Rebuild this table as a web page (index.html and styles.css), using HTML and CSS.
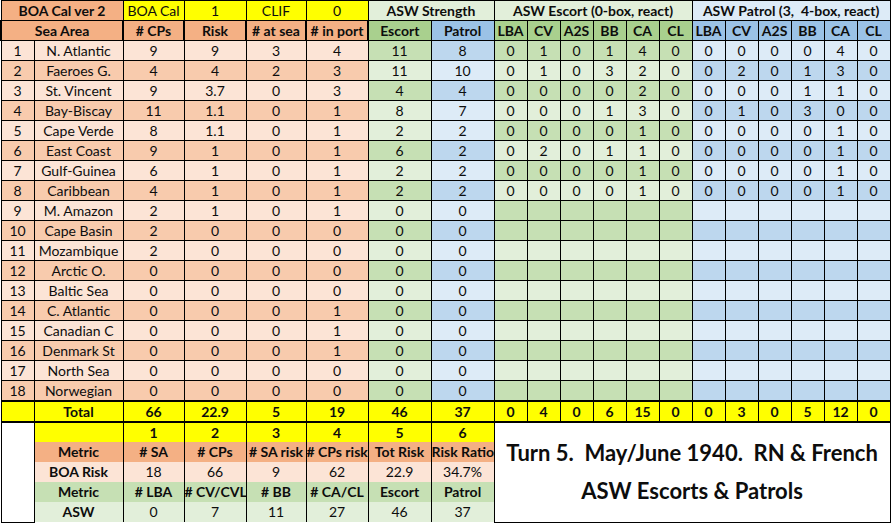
FILE: index.html
```html
<!DOCTYPE html>
<html>
<head>
<meta charset="utf-8">
<link rel="stylesheet" href="styles.css">
</head>
<body>
<table class="sheet">
<colgroup>
<col class="c-idx"><col class="c-name"><col class="c-cp"><col class="c-risk"><col class="c-sea"><col class="c-port"><col class="c-esc"><col class="c-pat">
<col class="c-s"><col class="c-s"><col class="c-s"><col class="c-s"><col class="c-s"><col class="c-s">
<col class="c-s"><col class="c-s"><col class="c-s"><col class="c-s"><col class="c-s"><col class="c-s">
</colgroup>
<tr class="top">
<td class="oh b" colspan="2">BOA Cal ver 2</td><td class="y">BOA Cal</td><td class="y">1</td><td class="y">CLIF</td><td class="y">0</td>
<td class="gt b sep" colspan="2">ASW Strength</td>
<td class="gt b sepe" colspan="6">ASW Escort (0-box, react)</td>
<td class="bt b sepe pre" colspan="6">ASW Patrol (3,  4-box, react)</td>
</tr>
<tr class="hdr">
<td class="oh b" colspan="2">Sea Area</td><td class="oh b">#&nbsp;CPs</td><td class="oh b">Risk</td><td class="oh b">#&nbsp;at sea</td><td class="oh b">#&nbsp;in port</td>
<td class="gh b sep">Escort</td><td class="bh b">Patrol</td>
<td class="gh b sepe">LBA</td><td class="gh b">CV</td><td class="gh b">A2S</td><td class="gh b">BB</td><td class="gh b">CA</td><td class="gh b">CL</td>
<td class="bh b sepe">LBA</td><td class="bh b">CV</td><td class="bh b">A2S</td><td class="bh b">BB</td><td class="bh b">CA</td><td class="bh b">CL</td>
</tr>

<tr class="lt"><td class="o">1</td><td class="o">N. Atlantic</td><td class="o">9</td><td class="o">9</td><td class="o">3</td><td class="o">4</td><td class="g2 sep">11</td><td class="b2">8</td>
<td class="g2 sepe">0</td><td class="g2">1</td><td class="g2">0</td><td class="g2">1</td><td class="g2">4</td><td class="g2">0</td>
<td class="b1 sepe">0</td><td class="b1">0</td><td class="b1">0</td><td class="b1">0</td><td class="b1">4</td><td class="b1">0</td></tr>
<tr class="dk"><td class="o">2</td><td class="o">Faeroes G.</td><td class="o">4</td><td class="o">4</td><td class="o">2</td><td class="o">3</td><td class="g1 sep">11</td><td class="b1">10</td>
<td class="g1 sepe">0</td><td class="g1">1</td><td class="g1">0</td><td class="g1">3</td><td class="g1">2</td><td class="g1">0</td>
<td class="b2 sepe">0</td><td class="b2">2</td><td class="b2">0</td><td class="b2">1</td><td class="b2">3</td><td class="b2">0</td></tr>
<tr class="lt"><td class="o">3</td><td class="o">St. Vincent</td><td class="o">9</td><td class="o">3.7</td><td class="o">0</td><td class="o">3</td><td class="g2 sep">4</td><td class="b2">4</td>
<td class="g2 sepe">0</td><td class="g2">0</td><td class="g2">0</td><td class="g2">0</td><td class="g2">2</td><td class="g2">0</td>
<td class="b1 sepe">0</td><td class="b1">0</td><td class="b1">0</td><td class="b1">1</td><td class="b1">1</td><td class="b1">0</td></tr>
<tr class="dk"><td class="o">4</td><td class="o">Bay-Biscay</td><td class="o">11</td><td class="o">1.1</td><td class="o">0</td><td class="o">1</td><td class="g1 sep">8</td><td class="b1">7</td>
<td class="g1 sepe">0</td><td class="g1">0</td><td class="g1">0</td><td class="g1">1</td><td class="g1">3</td><td class="g1">0</td>
<td class="b2 sepe">0</td><td class="b2">1</td><td class="b2">0</td><td class="b2">3</td><td class="b2">0</td><td class="b2">0</td></tr>
<tr class="lt"><td class="o">5</td><td class="o">Cape Verde</td><td class="o">8</td><td class="o">1.1</td><td class="o">0</td><td class="o">1</td><td class="g1 sep">2</td><td class="b1">2</td>
<td class="g2 sepe">0</td><td class="g2">0</td><td class="g2">0</td><td class="g2">0</td><td class="g2">1</td><td class="g2">0</td>
<td class="b1 sepe">0</td><td class="b1">0</td><td class="b1">0</td><td class="b1">0</td><td class="b1">1</td><td class="b1">0</td></tr>
<tr class="dk"><td class="o">6</td><td class="o">East Coast</td><td class="o">9</td><td class="o">1</td><td class="o">0</td><td class="o">1</td><td class="g2 sep">6</td><td class="b2">2</td>
<td class="g1 sepe">0</td><td class="g1">2</td><td class="g1">0</td><td class="g1">1</td><td class="g1">1</td><td class="g1">0</td>
<td class="b2 sepe">0</td><td class="b2">0</td><td class="b2">0</td><td class="b2">0</td><td class="b2">1</td><td class="b2">0</td></tr>
<tr class="lt"><td class="o">7</td><td class="o">Gulf-Guinea</td><td class="o">6</td><td class="o">1</td><td class="o">0</td><td class="o">1</td><td class="g1 sep">2</td><td class="b1">2</td>
<td class="g2 sepe">0</td><td class="g2">0</td><td class="g2">0</td><td class="g2">0</td><td class="g2">1</td><td class="g2">0</td>
<td class="b1 sepe">0</td><td class="b1">0</td><td class="b1">0</td><td class="b1">0</td><td class="b1">1</td><td class="b1">0</td></tr>
<tr class="dk"><td class="o">8</td><td class="o">Caribbean</td><td class="o">4</td><td class="o">1</td><td class="o">0</td><td class="o">1</td><td class="g2 sep">2</td><td class="b2">2</td>
<td class="g1 sepe">0</td><td class="g1">0</td><td class="g1">0</td><td class="g1">0</td><td class="g1">1</td><td class="g1">0</td>
<td class="b2 sepe">0</td><td class="b2">0</td><td class="b2">0</td><td class="b2">0</td><td class="b2">1</td><td class="b2">0</td></tr>
<tr class="lt"><td class="o">9</td><td class="o">M. Amazon</td><td class="o">2</td><td class="o">1</td><td class="o">0</td><td class="o">1</td><td class="g1 sep">0</td><td class="b1">0</td>
<td class="g2 sepe"></td><td class="g2"></td><td class="g2"></td><td class="g2"></td><td class="g2"></td><td class="g2"></td>
<td class="b1 sepe"></td><td class="b1"></td><td class="b1"></td><td class="b1"></td><td class="b1"></td><td class="b1"></td></tr>
<tr class="dk"><td class="o">10</td><td class="o">Cape Basin</td><td class="o">2</td><td class="o">0</td><td class="o">0</td><td class="o">0</td><td class="g2 sep">0</td><td class="b2">0</td>
<td class="g2 sepe"></td><td class="g2"></td><td class="g2"></td><td class="g2"></td><td class="g2"></td><td class="g2"></td>
<td class="b2 sepe"></td><td class="b2"></td><td class="b2"></td><td class="b2"></td><td class="b2"></td><td class="b2"></td></tr>
<tr class="lt"><td class="o">11</td><td class="o">Mozambique</td><td class="o">2</td><td class="o">0</td><td class="o">0</td><td class="o">0</td><td class="g1 sep">0</td><td class="b1">0</td>
<td class="g1 sepe"></td><td class="g1"></td><td class="g1"></td><td class="g1"></td><td class="g1"></td><td class="g1"></td>
<td class="b1 sepe"></td><td class="b1"></td><td class="b1"></td><td class="b1"></td><td class="b1"></td><td class="b1"></td></tr>
<tr class="dk"><td class="o">12</td><td class="o">Arctic O.</td><td class="o">0</td><td class="o">0</td><td class="o">0</td><td class="o">0</td><td class="g2 sep">0</td><td class="b2">0</td>
<td class="g2 sepe"></td><td class="g2"></td><td class="g2"></td><td class="g2"></td><td class="g2"></td><td class="g2"></td>
<td class="b2 sepe"></td><td class="b2"></td><td class="b2"></td><td class="b2"></td><td class="b2"></td><td class="b2"></td></tr>
<tr class="lt"><td class="o">13</td><td class="o">Baltic Sea</td><td class="o">0</td><td class="o">0</td><td class="o">0</td><td class="o">0</td><td class="g1 sep">0</td><td class="b1">0</td>
<td class="g1 sepe"></td><td class="g1"></td><td class="g1"></td><td class="g1"></td><td class="g1"></td><td class="g1"></td>
<td class="b1 sepe"></td><td class="b1"></td><td class="b1"></td><td class="b1"></td><td class="b1"></td><td class="b1"></td></tr>
<tr class="dk"><td class="o">14</td><td class="o">C. Atlantic</td><td class="o">0</td><td class="o">0</td><td class="o">0</td><td class="o">1</td><td class="g2 sep">0</td><td class="b2">0</td>
<td class="g2 sepe"></td><td class="g2"></td><td class="g2"></td><td class="g2"></td><td class="g2"></td><td class="g2"></td>
<td class="b2 sepe"></td><td class="b2"></td><td class="b2"></td><td class="b2"></td><td class="b2"></td><td class="b2"></td></tr>
<tr class="lt"><td class="o">15</td><td class="o">Canadian C</td><td class="o">0</td><td class="o">0</td><td class="o">0</td><td class="o">1</td><td class="g1 sep">0</td><td class="b1">0</td>
<td class="g1 sepe"></td><td class="g1"></td><td class="g1"></td><td class="g1"></td><td class="g1"></td><td class="g1"></td>
<td class="b1 sepe"></td><td class="b1"></td><td class="b1"></td><td class="b1"></td><td class="b1"></td><td class="b1"></td></tr>
<tr class="dk"><td class="o">16</td><td class="o">Denmark St</td><td class="o">0</td><td class="o">0</td><td class="o">0</td><td class="o">1</td><td class="g2 sep">0</td><td class="b2">0</td>
<td class="g2 sepe"></td><td class="g2"></td><td class="g2"></td><td class="g2"></td><td class="g2"></td><td class="g2"></td>
<td class="b2 sepe"></td><td class="b2"></td><td class="b2"></td><td class="b2"></td><td class="b2"></td><td class="b2"></td></tr>
<tr class="lt"><td class="o">17</td><td class="o">North Sea</td><td class="o">0</td><td class="o">0</td><td class="o">0</td><td class="o">0</td><td class="g1 sep">0</td><td class="b1">0</td>
<td class="g1 sepe"></td><td class="g1"></td><td class="g1"></td><td class="g1"></td><td class="g1"></td><td class="g1"></td>
<td class="b1 sepe"></td><td class="b1"></td><td class="b1"></td><td class="b1"></td><td class="b1"></td><td class="b1"></td></tr>
<tr class="dk"><td class="o">18</td><td class="o">Norwegian</td><td class="o">0</td><td class="o">0</td><td class="o">0</td><td class="o">0</td><td class="g2 sep">0</td><td class="b2">0</td>
<td class="g2 sepe"></td><td class="g2"></td><td class="g2"></td><td class="g2"></td><td class="g2"></td><td class="g2"></td>
<td class="b2 sepe"></td><td class="b2"></td><td class="b2"></td><td class="b2"></td><td class="b2"></td><td class="b2"></td></tr>

<tr class="total">
<td class="y"></td><td class="y b">Total</td><td class="y b">66</td><td class="y b">22.9</td><td class="y b">5</td><td class="y b">19</td><td class="y b sep">46</td><td class="y b">37</td>
<td class="y b sepe">0</td><td class="y b">4</td><td class="y b">0</td><td class="y b">6</td><td class="y b">15</td><td class="y b">0</td>
<td class="y b sepe">0</td><td class="y b">3</td><td class="y b">0</td><td class="y b">5</td><td class="y b">12</td><td class="y b">0</td>
</tr>
<tr class="sum">
<td class="w blank" rowspan="5"></td>
<td class="y"></td><td class="y b">1</td><td class="y b">2</td><td class="y b">3</td><td class="y b">4</td><td class="y b">5</td><td class="y b">6</td>
<td class="note sepe" colspan="12" rowspan="5"><div class="note-in"><div>Turn 5.  May/June 1940.  RN &amp; French</div><div>ASW Escorts &amp; Patrols</div></div></td>
</tr>
<tr class="sum">
<td class="oh b">Metric</td><td class="oh b">#&nbsp;SA</td><td class="oh b">#&nbsp;CPs</td><td class="oh b">#&nbsp;SA risk</td><td class="oh b">#&nbsp;CPs risk</td><td class="oh b">Tot Risk</td><td class="oh b">Risk Ratio</td>
</tr>
<tr class="sum">
<td class="ol b">BOA Risk</td><td class="ol">18</td><td class="ol">66</td><td class="ol">9</td><td class="ol">62</td><td class="ol">22.9</td><td class="ol">34.7%</td>
</tr>
<tr class="sum">
<td class="g2 b">Metric</td><td class="g2 b">#&nbsp;LBA</td><td class="g2 b">#&nbsp;CV/CVL</td><td class="g2 b">#&nbsp;BB</td><td class="g2 b">#&nbsp;CA/CL</td><td class="g2 b">Escort</td><td class="g2 b">Patrol</td>
</tr>
<tr class="sum last">
<td class="g1 b">ASW</td><td class="g1">0</td><td class="g1">7</td><td class="g1">11</td><td class="g1">27</td><td class="g1">46</td><td class="g1">37</td>
</tr>
</table>
</body>
</html>
```
FILE: styles.css
```css
html, body {
  margin: 0;
  padding: 0;
  background: #ffffff;
}
.sheet {
  border-collapse: collapse;
  table-layout: fixed;
  width: 890px;
  font-family: Lato, "Open Sans", sans-serif;
  font-size: 14px;
  color: #0d0d0d;
}
.c-idx { width: 33px; }
.c-name { width: 89px; }
.c-cp { width: 61px; }
.c-risk { width: 62px; }
.c-sea { width: 60px; }
.c-port { width: 62px; }
.c-esc { width: 63px; }
.c-pat { width: 63px; }
.c-s { width: 33px; }

.sheet tr { height: 20px; }
.sheet td {
  padding: 0;
  height: 19px;
  line-height: 18px;
  text-align: center;
  white-space: nowrap;
  overflow: hidden;
  border: 1px solid #000000;
}
.b { font-weight: 700; }
.sheet td.pre { white-space: pre; }

.oh { background: #F4B084; }
.y { background: #FFFF00; }
.w { background: #ffffff; }
.gt { background: #E2EFDA; }
.bt { background: #DDEBF7; }
.gh { background: #A9D08E; }
.bh { background: #9BC2E6; }
.g1 { background: #E2EFDA; }
.g2 { background: #C6E0B4; }
.b1 { background: #DDEBF7; }
.b2 { background: #BDD7EE; }
.ol { background: #FCE4D6; }

.o {
  border-top: none;
  border-bottom: none;
  border-left: 2px solid #000000;
  border-right: 2px solid #000000;
}
.lt .o { background: #FCE4D6; }
.dk .o { background: #F8CBAD; }

.hdr .oh { border-left-width: 2px; border-right-width: 2px; }
.sep { border-left: 2px solid #000000; }
.sepe { border-left: 3px solid #000000; }

.total td {
  border-top: 2px solid #000000;
  border-bottom: 2px solid #000000;
}
.sum td.oh, .sum td.ol, .sum td.g1, .sum td.g2, .sum td.y {
  border-top: none;
  border-bottom: none;
}
.blank {
  border-left: none;
  border-bottom: 3px solid #000000;
}
.last td { border-bottom: 3px solid #000000; }

.note {
  background: #ffffff;
  border: 3px solid #000000;
  vertical-align: middle;
}
.note-in {
  font-size: 22px;
  font-weight: 700;
  line-height: 38px;
  white-space: pre;
  text-align: center;
  color: #0d0d0d;
}
```
